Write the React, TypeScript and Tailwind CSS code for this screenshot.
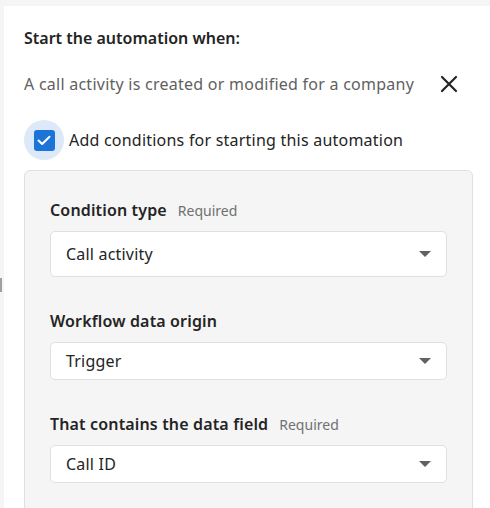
import React from 'react';

const font = { fontFamily: '"Segoe UI", "Noto Sans", "Open Sans", sans-serif' };

function Caret() {
  return (
    <svg width="12" height="6" viewBox="0 0 12 6" className="shrink-0">
      <path d="M0 0 L12 0 L6 6 Z" fill="#616161" />
    </svg>
  );
}

function Select({ value, tall }: { value: string; tall?: boolean }) {
  return (
    <div
      className={`flex items-center justify-between bg-white border border-[#e0e0e0] rounded-[5px] pl-[15px] pr-[15px] ${
        tall ? 'h-[46px]' : 'h-[38px]'
      }`}
    >
      <span className="text-[16px] leading-[22px] tracking-[0.2px] text-[#242424]">{value}</span>
      <Caret />
    </div>
  );
}

function Field({ label, required, value, tall, first }: { label: string; required?: boolean; value: string; tall?: boolean; first?: boolean }) {
  return (
    <div className={first ? '' : 'mt-[33px]'}>
      <div className="flex items-baseline gap-[11px] mb-[10px]">
        <span className="text-[16px] leading-[22px] font-semibold tracking-[0.15px] text-[#242424]">{label}</span>
        {required && <span className="text-[14px] leading-[20px] text-[#707070]">Required</span>}
      </div>
      <Select value={value} tall={tall} />
    </div>
  );
}

export default function App() {
  return (
    <div className="relative w-[490px] h-[508px] overflow-hidden bg-[#f5f5f5] pt-[6px] pl-[4px]" style={font}>
      <div className="absolute left-0 top-[278px] w-[2px] h-[14px] bg-[#a0a0a0]" />
      <div className="bg-white h-full pl-[20px] pt-[21px]">
        <h2 className="text-[16px] leading-[22px] font-semibold text-[#242424]">Start the automation when:</h2>
        <div className="flex items-center mt-[24px] w-[434px] justify-between">
          <span className="text-[16px] leading-[22px] tracking-[0.25px] text-[#616161]">A call activity is created or modified for a company</span>
          <svg width="18" height="18" viewBox="0 0 18 18">
            <path d="M2 2 L16 16 M16 2 L2 16" stroke="#242424" strokeWidth="2.2" strokeLinecap="round" />
          </svg>
        </div>
        <div className="flex items-center mt-[25px]">
          <div className="w-[40px] h-[40px] rounded-full bg-[#dbe9f8] flex items-center justify-center">
            <div className="w-[21px] h-[21px] rounded-[3px] bg-[#1c74d9] flex items-center justify-center">
              <svg width="14" height="11" viewBox="0 0 14 11">
                <path d="M1.5 5.5 L5.2 9 L12.5 1.8" stroke="white" strokeWidth="2" fill="none" strokeLinecap="round" strokeLinejoin="round" />
              </svg>
            </div>
          </div>
          <span className="ml-[5px] text-[16px] leading-[22px] tracking-[0.22px] text-[#242424]">Add conditions for starting this automation</span>
        </div>
        <div className="mt-[10px] w-[449px] bg-[#f5f5f5] border border-[#e0e0e0] rounded-[6px] px-[25px] pt-[28px] pb-[40px]">
          <Field first label="Condition type" required value="Call activity" tall />
          <Field label="Workflow data origin" value="Trigger" />
          <Field label="That contains the data field" required value="Call ID" />
        </div>
      </div>
    </div>
  );
}
